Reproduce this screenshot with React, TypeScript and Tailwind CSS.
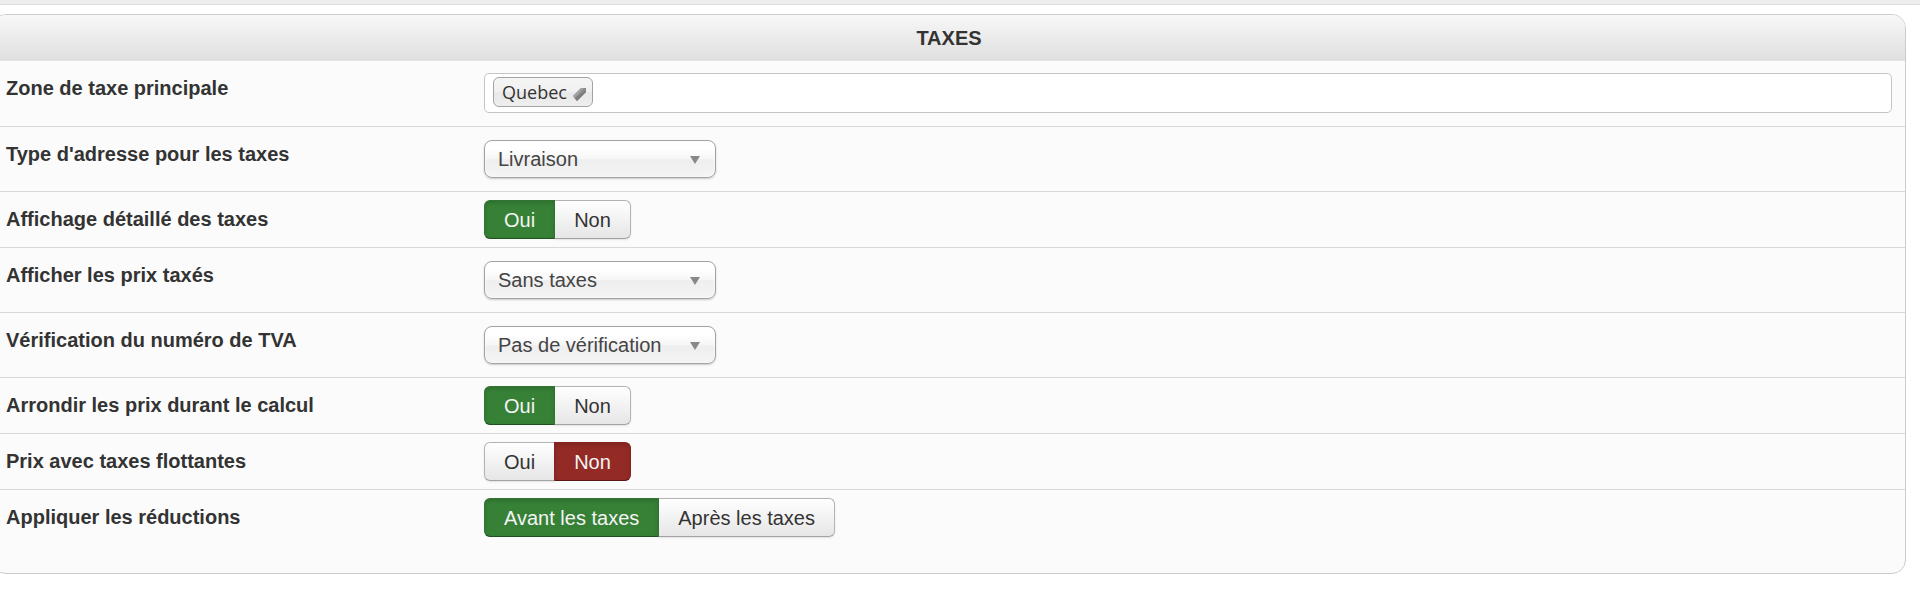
import React, { useState } from 'react';

interface Option {
  value: string;
  label: string;
  // colour of the segment once it is picked
  tone?: 'green' | 'red';
}

const yesNo: Option[] = [
  { value: '1', label: 'Oui', tone: 'green' },
  { value: '0', label: 'Non', tone: 'red' },
];

const toneClasses = {
  green: 'bg-[#378137] border-[#2f742f] border-b-[#205020] text-[#f4f4f4] shadow-[inset_0_2px_4px_rgba(0,0,0,0.15)]',
  red: 'bg-[#942a25] border-[#87241f] border-b-[#5c1815] text-[#f4f4f4] shadow-[inset_0_2px_4px_rgba(0,0,0,0.15)]',
};

const idleClasses =
  'bg-linear-to-b from-white to-[#e6e6e6] border-[#b3b3b3] border-b-[#a2a2a2] text-[#333] shadow-[0_1px_2px_rgba(0,0,0,0.1)]';

const Row: React.FC<{ label: string; id: string; group?: boolean; children: React.ReactNode }> = ({
  label,
  id,
  group,
  children,
}) => {
  const labelClasses = 'w-[478px] shrink-0 pt-3 leading-[30px] font-bold';

  return (
    <div className="flex items-start border-b border-[#d8d8d8] pl-[13px] pr-[13px] last:border-b-0 last:pb-7">
      {group ? (
        <span id={`${id}-label`} className={labelClasses}>{label}</span>
      ) : (
        <label htmlFor={id} className={labelClasses}>{label}</label>
      )}
      {children}
    </div>
  );
};

const Toggle: React.FC<{ id: string; options: Option[]; initial: string }> = ({ id, options, initial }) => {
  const [value, setValue] = useState(initial);

  return (
    <div role="radiogroup" aria-labelledby={`${id}-label`} className="my-2 flex">
      {options.map((option) => (
        <label
          key={option.value}
          className={`relative flex h-[39px] cursor-pointer items-center border px-[19px] -ml-px first:ml-0 first:rounded-l-md last:rounded-r-md ${
            value === option.value ? `z-10 ${toneClasses[option.tone ?? 'green']}` : idleClasses
          }`}
        >
          <input
            type="radio"
            name={id}
            value={option.value}
            checked={value === option.value}
            onChange={() => setValue(option.value)}
            className="sr-only"
          />
          {option.label}
        </label>
      ))}
    </div>
  );
};

const Select: React.FC<{ id: string; options: string[] }> = ({ id, options }) => (
  <div className="relative my-[13px] w-[232px]">
    <select
      id={id}
      className="block h-[38px] w-full appearance-none rounded-lg border border-[#a3a3a3] bg-[linear-gradient(#fff_20%,#f6f6f6_50%,#eee_52%,#f4f4f4_100%)] pl-[13px] pr-9 text-[#444] shadow-[inset_0_0_3px_#fff,0_1px_2px_rgba(0,0,0,0.2)]"
    >
      {options.map((option) => (
        <option key={option}>{option}</option>
      ))}
    </select>
    <svg viewBox="0 0 10 8" className="pointer-events-none absolute right-4 top-4 h-2 w-[10px]" fill="#888">
      <path d="M0 0h10L5 8z" />
    </svg>
  </div>
);

const App: React.FC = () => {
  return (
    <div className="overflow-hidden bg-white font-['Liberation_Sans',Arial,sans-serif] text-[20px] text-[#333]">
      <div className="h-[5px] border-b border-[#ddd] bg-[#eee]"></div>

      <section className="-ml-2 mr-[14px] mt-[9px] mb-5 overflow-hidden rounded-[14px] border border-[#ccc] bg-[#fbfbfb]">
        <h2 className="h-[46px] border-b border-[#e4e4e4] bg-linear-to-b from-[#f8f8f8] to-[#dfdfdf] text-center font-bold leading-[46px]">
          TAXES
        </h2>

        <form>
          <Row id="zone" label="Zone de taxe principale">
            <div className="mt-3 mb-[13px] flex h-10 flex-1 items-center rounded-[5px] border border-[#c4c4c4] bg-white pl-2">
              <button
                type="button"
                className="mb-0.5 flex h-[30px] items-center gap-[5px] rounded-md border border-[#a3a3a3] bg-[linear-gradient(#f4f4f4_20%,#f0f0f0_50%,#e8e8e8_52%,#eee_100%)] pl-2 pr-[5px] font-['Open_Sans','Noto_Sans',sans-serif] text-[18px]"
              >
                Quebec
                {/* Pencil */}
                <svg viewBox="0 0 15 15" className="mt-1 h-[15px] w-[15px]">
                  <path d="M1 9 9 1h5v4L5 14 3 12z" fill="#8a8a8a" />
                  <path d="M1 9 9 1h3L3 11z" fill="#a3a3a3" />
                  <path d="m3 11 2 3 9-9V3z" fill="#7d7d7d" />
                </svg>
              </button>
              <input id="zone" type="text" className="h-full min-w-0 flex-1 px-2 outline-none" />
            </div>
          </Row>
          <Row id="adresse" label="Type d'adresse pour les taxes">
            <Select id="adresse" options={['Livraison', 'Facturation']} />
          </Row>
          <Row id="detail" label="Affichage détaillé des taxes" group>
            <Toggle id="detail" options={yesNo} initial="1" />
          </Row>
          <Row id="prix" label="Afficher les prix taxés">
            <Select id="prix" options={['Sans taxes', 'Avec taxes']} />
          </Row>
          <Row id="tva" label="Vérification du numéro de TVA">
            <Select id="tva" options={['Pas de vérification', 'Vérification']} />
          </Row>
          <Row id="arrondir" label="Arrondir les prix durant le calcul" group>
            <Toggle id="arrondir" options={yesNo} initial="1" />
          </Row>
          <Row id="flottantes" label="Prix avec taxes flottantes" group>
            <Toggle id="flottantes" options={yesNo} initial="0" />
          </Row>
          <Row id="reductions" label="Appliquer les réductions" group>
            <Toggle
              id="reductions"
              options={[
                { value: 'avant', label: 'Avant les taxes' },
                { value: 'apres', label: 'Après les taxes' },
              ]}
              initial="avant"
            />
          </Row>
        </form>
      </section>
    </div>
  );
};

export default App;
